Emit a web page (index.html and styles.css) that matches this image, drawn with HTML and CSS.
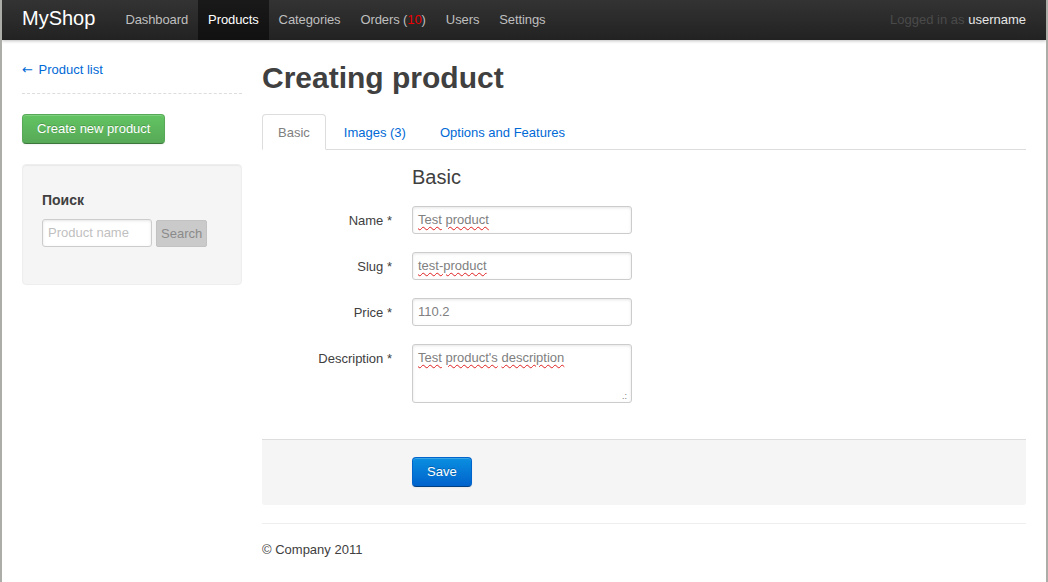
FILE: index.html
```html
<!DOCTYPE html>
<html lang="en">
<head>
<meta charset="utf-8">
<title>MyShop – Creating product</title>
<link rel="stylesheet" href="styles.css">
</head>
<body>
<header class="topbar">
  <a class="brand" href="#">MyShop</a>
  <ul class="nav">
    <li><a href="#">Dashboard</a></li>
    <li class="active"><a href="#">Products</a></li>
    <li><a href="#">Categories</a></li>
    <li><a href="#">Orders (<span class="count">10</span>)</a></li>
    <li><a href="#">Users</a></li>
    <li><a href="#">Settings</a></li>
  </ul>
  <p class="login">Logged in as <a href="#">username</a></p>
</header>

<div class="container">
  <aside class="sidebar">
    <div class="back"><a href="#"><span class="arrow">←</span> Product list</a></div>
    <div class="sidebar-actions"><a class="btn success" href="#">Create new product</a></div>
    <div class="well">
      <h5>Поиск</h5>
      <form class="search">
        <span class="field small placeholder">Product name</span>
        <span class="btn-small disabled">Search</span>
      </form>
    </div>
  </aside>

  <main class="content">
    <h1>Creating product</h1>
    <ul class="tabs">
      <li class="active"><a href="#">Basic</a></li>
      <li><a href="#">Images (3)</a></li>
      <li><a href="#">Options and Features</a></li>
    </ul>

    <form class="form">
      <fieldset>
        <legend>Basic</legend>
        <div class="row">
          <label>Name *</label>
          <div class="field"><span class="sp">Test</span> <span class="sp">product</span></div>
        </div>
        <div class="row">
          <label>Slug *</label>
          <div class="field"><span class="sp">test-product</span></div>
        </div>
        <div class="row">
          <label>Price *</label>
          <div class="field">110.2</div>
        </div>
        <div class="row">
          <label>Description *</label>
          <div class="field area"><span class="sp">Test</span> <span class="sp">product's</span> <span class="sp">description</span><span class="grip">.:</span></div>
        </div>
      </fieldset>
      <div class="form-actions">
        <a class="btn primary" href="#">Save</a>
      </div>
    </form>

    <footer class="footer">© Company 2011</footer>
  </main>
</div>
</body>
</html>
```

FILE: styles.css
```css
html, body {
  margin: 0;
  padding: 0;
}
body {
  min-height: 582px;
  box-sizing: border-box;
  border-left: 2px solid #acaca8;
  border-right: 2px solid #acaca8;
  font-family: "Liberation Sans", Arial, sans-serif;
  font-size: 13px;
  line-height: 18px;
  color: #404040;
  background: #fff;
}
a {
  color: #0069d6;
  text-decoration: none;
}
ul {
  list-style: none;
  margin: 0;
  padding: 0;
}

/* top bar */
.topbar {
  height: 40px;
  display: flex;
  align-items: flex-start;
  padding: 0 20px;
  background: linear-gradient(#333333, #222222);
  box-shadow: 0 1px 3px rgba(0, 0, 0, 0.25);
  position: relative;
}
.brand {
  display: block;
  padding: 8px 20px 12px 0;
  font-size: 20px;
  line-height: 20px;
  color: #ffffff;
}
.nav {
  display: flex;
}
.nav a {
  display: block;
  padding: 10px 10px 11px;
  line-height: 19px;
  color: #bfbfbf;
  letter-spacing: -0.1px;
}
.nav .active a {
  background: rgba(0, 0, 0, 0.5);
  color: #ffffff;
}
.nav .count {
  color: #ee0000;
}
.login {
  margin: 0 0 0 auto;
  line-height: 40px;
  color: #4a4a4a;
}
.login a {
  color: #e6e6e6;
}

/* layout */
.container {
  display: flex;
  padding: 20px 20px 0;
}
.sidebar {
  width: 220px;
  flex: none;
}
.content {
  flex: 1;
  margin-left: 20px;
}

/* sidebar */
.back {
  padding-top: 1px;
  padding-bottom: 14px;
  border-bottom: 1px dashed #dddddd;
  margin-bottom: 20px;
}
.arrow {
  font-family: "DejaVu Sans", sans-serif;
  font-size: 13px;
  margin-right: 2px;
}
.sidebar-actions {
  margin-bottom: 20px;
}
.btn {
  display: inline-block;
  vertical-align: top;
  padding: 5px 14px 5px;
  line-height: 18px;
  border: 1px solid #cccccc;
  border-radius: 4px;
  box-shadow: inset 0 1px 0 rgba(255, 255, 255, 0.2), 0 1px 2px rgba(0, 0, 0, 0.05);
}
.btn.success {
  color: #ffffff;
  background: linear-gradient(#62c462, #57a957);
  border-color: #57a957 #57a957 #3d773d;
  text-shadow: 0 -1px 0 rgba(0, 0, 0, 0.2);
}
.btn.primary {
  color: #ffffff;
  background: linear-gradient(#0a8fe0, #0062cc);
  border-color: #0064cd #0064cd #003f81;
  text-shadow: 0 -1px 0 rgba(0, 0, 0, 0.25);
}
.well {
  padding: 19px;
  background: #f5f5f5;
  border: 1px solid #eeeeee;
  border-radius: 4px;
  box-shadow: inset 0 1px 1px rgba(0, 0, 0, 0.05);
}
.well h5 {
  margin: 7px 0 10px;
  font-size: 14px;
  line-height: 18px;
  font-weight: bold;
}
.search {
  display: flex;
  align-items: center;
  gap: 4px;
  margin-bottom: 18px;
}
.field {
  display: block;
  box-sizing: border-box;
  width: 220px;
  height: 28px;
  padding: 4px 5px;
  line-height: 18px;
  color: #808080;
  background: #ffffff;
  border: 1px solid #cccccc;
  border-radius: 3px;
  box-shadow: inset 0 1px 3px rgba(0, 0, 0, 0.1);
}
.field.small {
  width: 110px;
}
.placeholder {
  color: #bfbfbf;
}
.btn-small {
  display: block;
  padding: 4px 4px;
  line-height: 17px;
  border: 1px solid #c2c2c2;
  border-radius: 2px;
  background: #cacaca;
  color: #8a8a8a;
}

/* content */
h1 {
  margin: 0 0 18px;
  font-size: 30px;
  line-height: 36px;
  font-weight: bold;
  color: #404040;
}
.tabs {
  display: flex;
  border-bottom: 1px solid #dddddd;
}
.tabs li {
  margin-bottom: -1px;
}
.tabs a {
  display: block;
  padding: 1px 15px 0;
  margin-right: 2px;
  line-height: 33px;
  border: 1px solid transparent;
  border-radius: 4px 4px 0 0;
}
.tabs .active a {
  color: #808080;
  background: #ffffff;
  border-color: #dddddd #dddddd transparent;
}

.form fieldset {
  margin: 0;
  padding: 0;
  border: 0;
}
.form legend {
  display: block;
  padding: 17px 0 0 150px;
  margin-bottom: 19px;
  font-size: 20px;
  line-height: 20px;
  color: #404040;
}
.row {
  display: flex;
  margin-bottom: 18px;
}
.row label {
  width: 130px;
  padding-top: 6px;
  text-align: right;
  line-height: 18px;
  color: #404040;
}
.row .field {
  margin-left: 20px;
}
.field.area {
  height: 59px;
  position: relative;
}
.sp {
  text-decoration: underline wavy #e02020;
  text-decoration-thickness: 1px;
  text-underline-offset: 2px;
}
.grip {
  position: absolute;
  right: 4px;
  bottom: 1px;
  font-size: 9px;
  line-height: 9px;
  color: #777777;
}

.form-actions {
  margin: 18px 0 18px;
  padding: 17px 20px 18px 150px;
  background: #f5f5f5;
  border-top: 1px solid #dddddd;
  border-radius: 0 0 3px 3px;
}

.footer {
  padding-top: 17px;
  border-top: 1px solid #eeeeee;
}
```
